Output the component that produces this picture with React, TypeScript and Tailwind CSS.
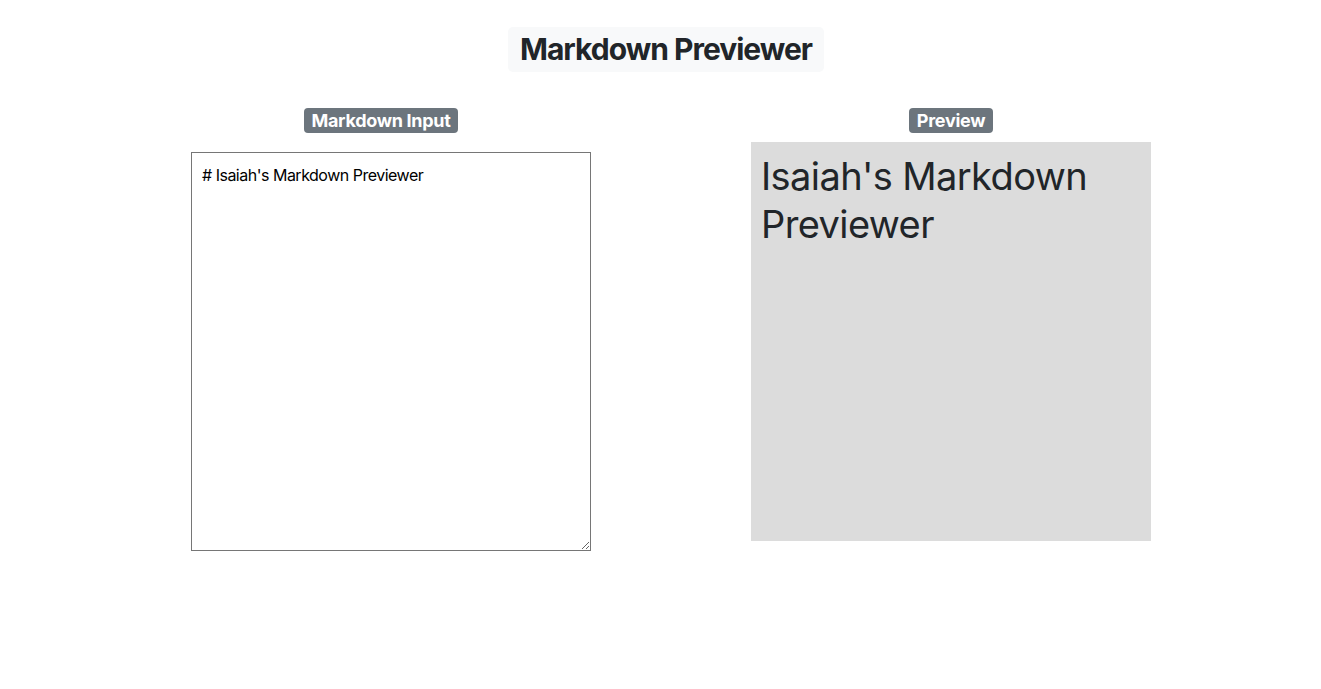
import { useState } from 'react';

const App = () => {
  const [text, setText] = useState("# Isaiah's Markdown Previewer");

  return (
    <div className="min-h-[689px] bg-white font-['Inter',sans-serif] text-[#212529]">
      <div className="ml-[96px] w-[1140px] pt-[27px]">
        <div className="flex justify-center">
          <h1 className="rounded-[5px] bg-[#f8f9fa] px-[12px] text-[30px] font-bold leading-[45px] tracking-[-1px]">
            Markdown Previewer
          </h1>
        </div>
        <div className="mt-[36px] flex">
          <div className="flex w-[570px] flex-col items-center">
            <span className="rounded-[4px] bg-[#6c757d] px-[8px] text-[18px] font-bold leading-[25px] tracking-[-0.3px] text-white">
              Markdown Input
            </span>
            <textarea
              value={text}
              onChange={(e) => setText(e.target.value)}
              className="ml-[20px] mt-[19px] h-[399px] w-[400px] border border-[#767676] p-[10px] text-[16px] leading-[24px] tracking-[-0.5px] text-black outline-none"
            />
          </div>
          <div className="flex w-[570px] flex-col items-center">
            <span className="rounded-[4px] bg-[#6c757d] px-[8px] text-[18px] font-bold leading-[25px] tracking-[-0.3px] text-white">
              Preview
            </span>
            <div className="mt-[9px] h-[399px] w-[400px] bg-[#dcdcdc] px-[10px] pt-[10px]">
              <h1 className="text-[38px] leading-[48px] font-normal tracking-[-0.6px]">
                Isaiah's Markdown Previewer
              </h1>
            </div>
          </div>
        </div>
      </div>
    </div>
  );
};

export default App;
